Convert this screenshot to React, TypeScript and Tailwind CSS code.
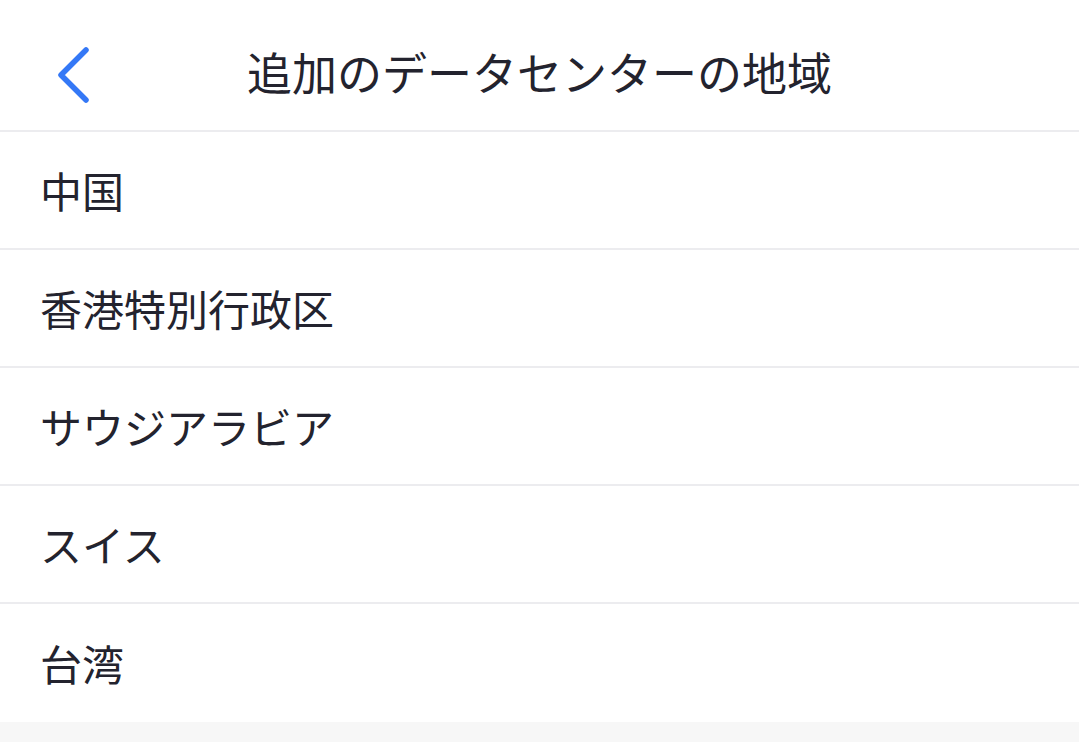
import React from "react";

const regions = ["中国", "香港特別行政区", "サウジアラビア", "スイス", "台湾"];

export default function App() {
  return (
    <div
      className="min-h-[742px] w-full bg-[#f7f7f7]"
      style={{ fontFamily: '"Noto Sans CJK JP", "Noto Sans", sans-serif' }}
    >
      {/* Header */}
      <div className="relative flex h-[132px] items-center justify-center border-b-2 border-[#ececef] bg-white pt-[12px]">
        <button className="absolute left-[56px] top-[45px]">
          <svg width="36" height="60" viewBox="0 0 36 60" fill="none">
            <path
              d="M30 5 L5 30 L30 55"
              stroke="#3478f6"
              strokeWidth="5.5"
              strokeLinecap="round"
              strokeLinejoin="round"
            />
          </svg>
        </button>
        <h1 className="text-[45px] leading-none text-[#23232e]">
          追加のデータセンターの地域
        </h1>
      </div>

      {/* List */}
      <div className="bg-white">
        {regions.map((name, i) => (
          <div
            key={name}
            className={`flex h-[118px] items-center pl-[40px] ${
              i < regions.length - 1 ? "border-b-2 border-[#ececef]" : ""
            }`}
          >
            <span className="text-[42px] leading-none text-[#23232e]">{name}</span>
          </div>
        ))}
      </div>
    </div>
  );
}
